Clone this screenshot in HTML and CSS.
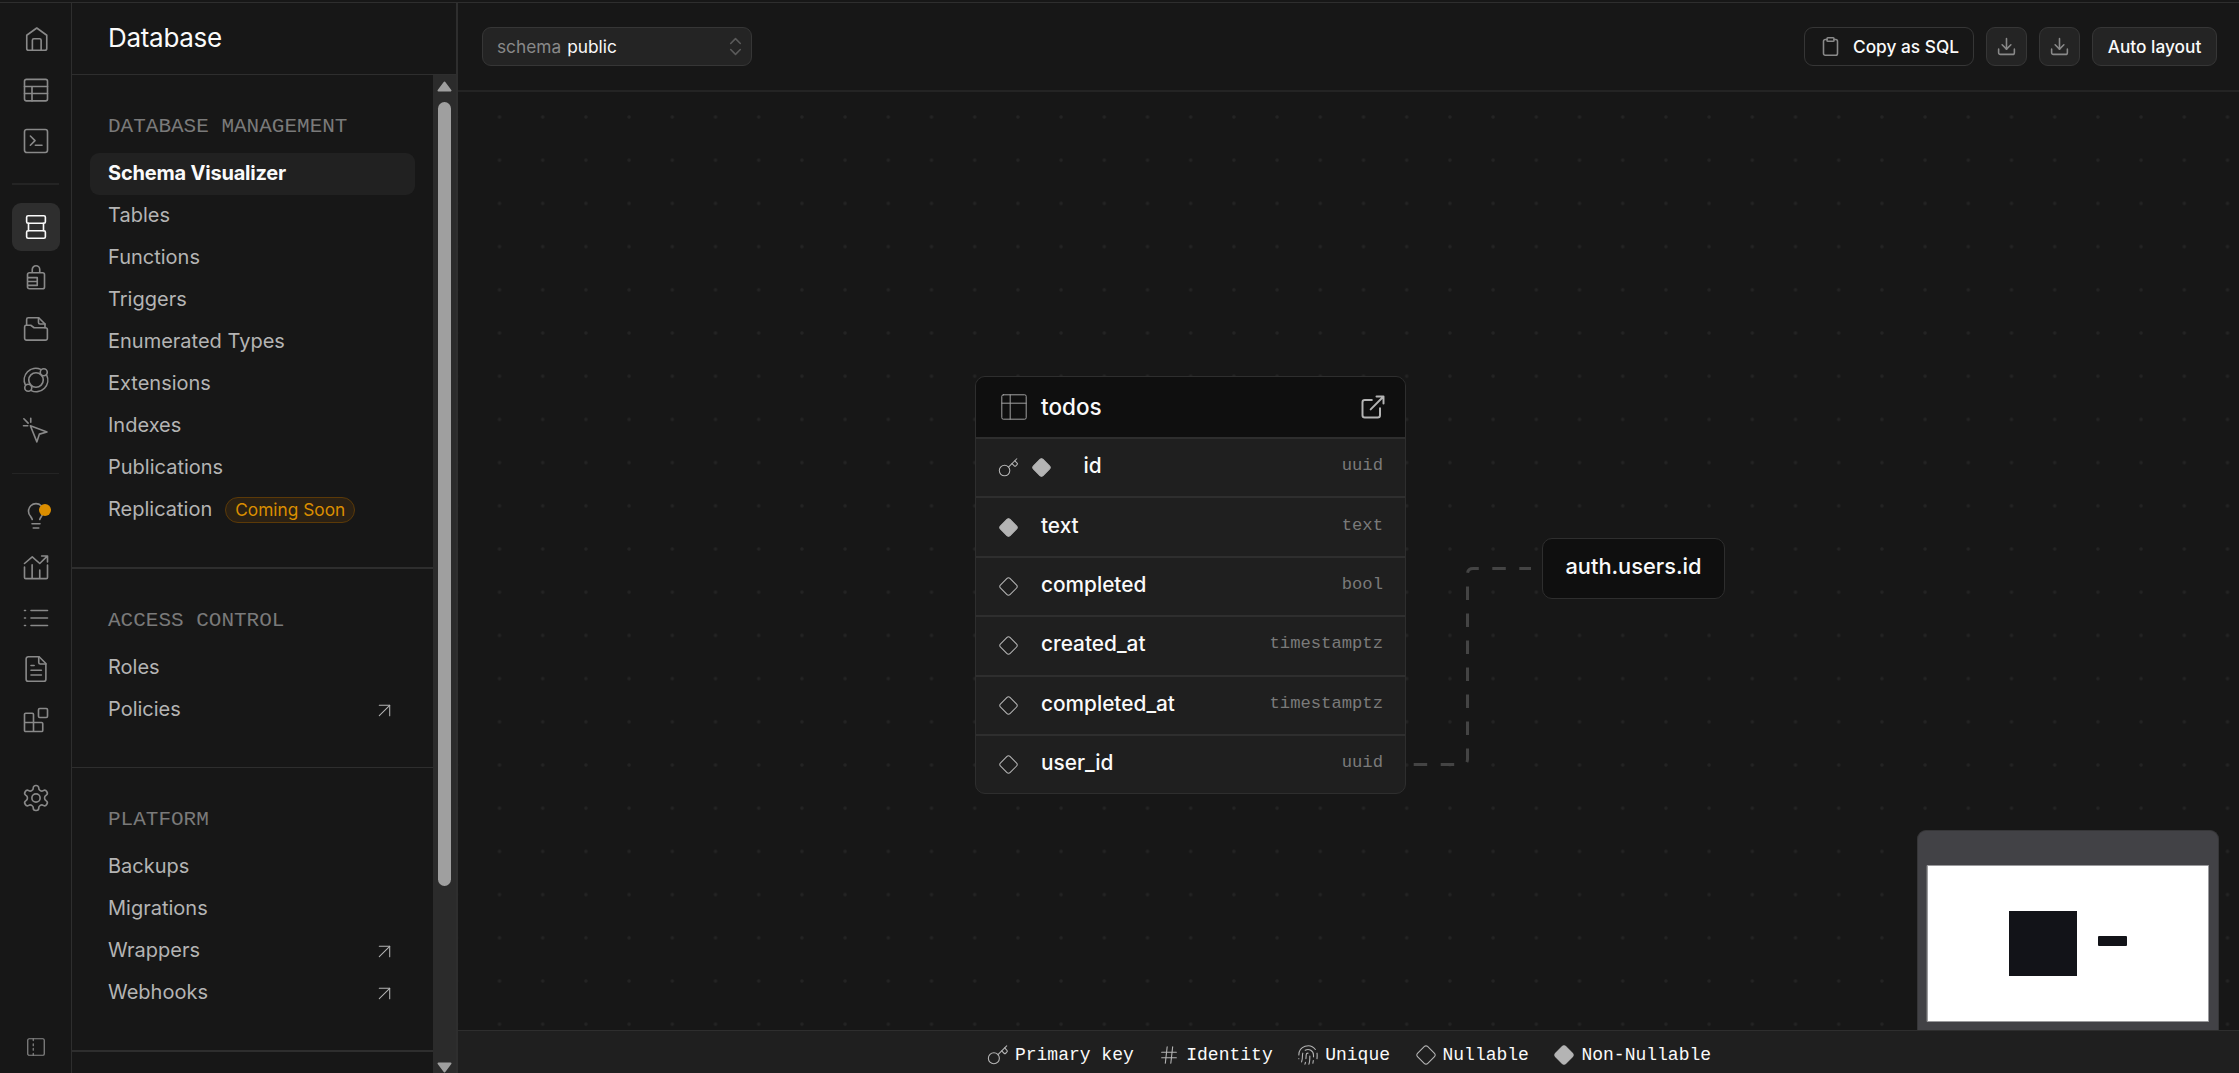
FILE: index.html
```html
<!DOCTYPE html>
<html lang="en">
<head>
  <meta charset="UTF-8">
  <meta name="viewport" content="width=device-width, initial-scale=1.0">
  <title>Schema Visualizer | Database</title>
  <link rel="stylesheet" href="styles.css">
</head>
<body>
  <svg class="sprite" width="0" height="0">
    <symbol id="i-diamond" viewBox="0 0 24 24"><path d="M2.7 10.3a2.41 2.41 0 0 0 0 3.41l7.59 7.59a2.41 2.41 0 0 0 3.41 0l7.59-7.59a2.41 2.41 0 0 0 0-3.41l-7.59-7.59a2.41 2.41 0 0 0-3.41 0Z"/></symbol>
    <symbol id="i-key" viewBox="0 0 24 24"><circle cx="7.5" cy="15.5" r="6"/><path d="M12 11.5 21.5 2"/><path d="m16 7.5 2.6 2.6a1.3 1.3 0 0 0 1.8 0l1.4-1.4a1.3 1.3 0 0 0 0-1.8L19.3 4.3"/></symbol>
    <symbol id="i-arrow" viewBox="0 0 24 24"><path d="M7 7h10v10"/><path d="M7 17 17 7"/></symbol>
    <symbol id="i-download" viewBox="0 0 24 24"><path d="M21 15v4a2 2 0 0 1-2 2H5a2 2 0 0 1-2-2v-4"/><path d="m7 10 5 5 5-5"/><path d="M12 15V3"/></symbol>
  </svg>

  <div class="app">
    <nav class="rail">
      <a class="rail-item"><svg viewBox="0 0 24 24"><path d="M4.6 9 12.600 3.200l8 5.800V19.500a1.500 1.500 0 0 1-1.500 1.500h-13A1.500 1.500 0 0 1 4.600 19.500Z"/><path d="M9.100 21v-8a1.200 1.200 0 0 1 1.200-1.200h4.600a1.200 1.200 0 0 1 1.200 1.200v8"/></svg></a>
      <a class="rail-item"><svg viewBox="0 0 24 24"><rect x="2.800" y="3.500" width="18.400" height="17.200" rx="1.500"/><path d="M2.800 9.200h18.400M2.800 14.800h18.400M8.800 9.200v11.500"/></svg></a>
      <a class="rail-item"><svg viewBox="0 0 24 24"><rect x="2.800" y="2.800" width="18.400" height="18.400" rx="1.800"/><path d="m7.500 8 3.700 3.700-3.700 3.700M11.500 15.400h5.300"/></svg></a>
      <hr class="rail-line">
      <a class="rail-item active"><svg viewBox="0 0 24 24"><rect x="4.500" y="3" width="15" height="6" rx="1.200"/><path d="M6 9v6M18 9v6"/><rect x="4.500" y="15" width="15" height="6" rx="1.200"/></svg></a>
      <a class="rail-item"><svg viewBox="0 0 24 24"><path d="M5.200 9.300a1.500 1.500 0 0 1 1.500-1.500h10.600a1.500 1.500 0 0 1 1.500 1.500v9.800a1.500 1.500 0 0 1-1.500 1.500H6.700a1.500 1.500 0 0 1-1.500-1.500ZM9 7.800V5.200a3 3 0 0 1 6 0v2.600M5.200 11.700h7.800v6.200H5.200M5.200 14.800h7.800"/></svg></a>
      <a class="rail-item"><svg viewBox="0 0 24 24"><path d="M4.500 9V4.300A1.300 1.300 0 0 1 5.800 3h8.400l5 5v3"/><path d="M14 3v3.800a1.200 1.200 0 0 0 1.200 1.200h4"/><path d="M2.900 10.200A1.300 1.300 0 0 1 4.200 9h3.600l2.700 2h9.100a1.500 1.500 0 0 1 1.500 1.500v6.900a1.500 1.500 0 0 1-1.500 1.500H4.400a1.500 1.500 0 0 1-1.500-1.500Z"/></svg></a>
      <a class="rail-item"><svg viewBox="0 0 24 24"><circle cx="12" cy="12" r="5.800"/><circle cx="18.200" cy="5.800" r="2.800"/><circle cx="5.800" cy="18.200" r="2.800"/><path d="M15.800 3.500A9.300 9.300 0 0 0 3.500 16M8.200 20.500A9.300 9.300 0 0 0 20.500 8"/></svg></a>
      <a class="rail-item"><svg viewBox="0 0 24 24"><path d="m7.500 7.800 13.300 5-6.100 1.700-2 6.200Z"/><path d="M7.800 1.800v3.200M2 7.800h3.400M2.300 2.200l3.400 3.500"/></svg></a>
      <hr class="rail-line thin">
      <a class="rail-item"><svg viewBox="0 0 24 24"><path d="M9 14.800c-.3-1-.9-1.700-1.400-2.600a6 6 0 1 1 8.800 0c-.5.900-1.100 1.600-1.400 2.600M8.800 18.200h6.400M9.800 21.600h4.400"/></svg><span class="dot"></span></a>
      <a class="rail-item"><svg viewBox="0 0 24 24"><path d="M2.800 12v8.300a1 1 0 0 0 1 1h16.400a1 1 0 0 0 1-1V10.500M8.900 21.300V10.200M15 21.300v-6.800M2.800 9.200 9 3.900l6 5.300 6-5.900M16.500 3.200h4.700v4.700"/></svg></a>
      <a class="rail-item"><svg viewBox="0 0 24 24"><path d="M8 6h13.200M8 12h13.200M8 18h13.200M2.800 6h.8M2.800 12h.8M2.800 18h.8"/></svg></a>
      <a class="rail-item"><svg viewBox="0 0 24 24"><path d="M14.500 2.200H5.800A1.700 1.700 0 0 0 4.100 3.900v16.200a1.700 1.700 0 0 0 1.700 1.700h12.400a1.700 1.700 0 0 0 1.700-1.700V7.600Z"/><path d="M14.200 2.200v4.600a1.200 1.200 0 0 0 1.200 1.200h4.500M8 9.200h2.500M8 13h8.300M8 16.800h8.300"/></svg></a>
      <a class="rail-item"><svg viewBox="0 0 24 24"><rect x="14" y="2.800" width="7.200" height="7.200" rx="1"/><path d="M10 21.200V7.500A.9.900 0 0 0 9.100 6.600H3.700a.9.900 0 0 0-.9.900v12.800a.9.900 0 0 0 .9.900h12.800a.9.900 0 0 0 .9-.9v-5.400a.9.900 0 0 0-.9-.9H2.800"/></svg></a>
      <a class="rail-item settings"><svg viewBox="0 0 24 24"><path d="M12.220 2h-.44a2 2 0 0 0-2 2v.18a2 2 0 0 1-1 1.730l-.43.250a2 2 0 0 1-2 0l-.15-.08a2 2 0 0 0-2.730.730l-.22.380a2 2 0 0 0 .730 2.730l.15.100a2 2 0 0 1 1 1.720v.510a2 2 0 0 1-1 1.740l-.15.090a2 2 0 0 0-.73 2.730l.22.380a2 2 0 0 0 2.730.730l.15-.08a2 2 0 0 1 2 0l.43.250a2 2 0 0 1 1 1.730V20a2 2 0 0 0 2 2h.44a2 2 0 0 0 2-2v-.18a2 2 0 0 1 1-1.730l.43-.25a2 2 0 0 1 2 0l.15.080a2 2 0 0 0 2.730-.73l.22-.39a2 2 0 0 0-.73-2.730l-.15-.08a2 2 0 0 1-1-1.740v-.5a2 2 0 0 1 1-1.740l.15-.09a2 2 0 0 0 .730-2.730l-.22-.38a2 2 0 0 0-2.730-.73l-.15.080a2 2 0 0 1-2 0l-.43-.25a2 2 0 0 1-1-1.730V4a2 2 0 0 0-2-2z"/><circle cx="12" cy="12" r="3.300"/></svg></a>
      <a class="rail-toggle"><svg viewBox="0 0 24 24"><rect x="3" y="3" width="18" height="18" rx="1.500"/><path d="M9 3v2M9 8.500v2M9 13.500v2M9 19v2"/></svg></a>
    </nav>

    <aside class="sidebar">
      <h1 class="sidebar-title">Database</h1>
      <div class="sidebar-body">
        <div class="menu">
          <section class="group">
            <h2>DATABASE MANAGEMENT</h2>
            <a class="link current">Schema Visualizer</a>
            <a class="link">Tables</a>
            <a class="link">Functions</a>
            <a class="link">Triggers</a>
            <a class="link">Enumerated Types</a>
            <a class="link">Extensions</a>
            <a class="link">Indexes</a>
            <a class="link">Publications</a>
            <a class="link">Replication <span class="badge">Coming Soon</span></a>
          </section>
          <section class="group thin">
            <h2>ACCESS CONTROL</h2>
            <a class="link">Roles</a>
            <a class="link">Policies <svg><use href="#i-arrow"/></svg></a>
          </section>
          <section class="group">
            <h2>PLATFORM</h2>
            <a class="link">Backups</a>
            <a class="link">Migrations</a>
            <a class="link">Wrappers <svg><use href="#i-arrow"/></svg></a>
            <a class="link">Webhooks <svg><use href="#i-arrow"/></svg></a>
          </section>
        </div>
        <div class="scrollbar">
          <svg class="scroll-arrow" viewBox="0 0 15 11"><path d="M7.500 1.500 13.500 9.500h-12Z"/></svg>
          <div class="thumb"></div>
          <svg class="scroll-arrow down" viewBox="0 0 15 11"><path d="M1.500 1.500h12l-6 8Z"/></svg>
        </div>
      </div>
    </aside>

    <main class="main">
      <header class="toolbar">
        <button class="select"><span class="muted">schema</span><span>public</span><svg viewBox="0 0 24 24"><path d="m6.500 8.500 5.500-5.500 5.500 5.500M6.500 15.500l5.500 5.500 5.500-5.500"/></svg></button>
        <button class="btn outline"><svg viewBox="0 0 24 24"><rect x="8" y="2" width="8" height="4" rx="1"/><path d="M16 4h2a2 2 0 0 1 2 2v14a2 2 0 0 1-2 2H6a2 2 0 0 1-2-2V6a2 2 0 0 1 2-2h2"/></svg><span>Copy as SQL</span></button>
        <button class="btn icon"><svg><use href="#i-download"/></svg></button>
        <button class="btn icon"><svg><use href="#i-download"/></svg></button>
        <button class="btn auto"><span>Auto layout</span></button>
      </header>

      <div class="canvas">
        <svg class="grid">
          <defs>
            <pattern id="dots" x="19.900" y="3.400" width="43.200" height="43.200" patternUnits="userSpaceOnUse"><circle cx="21.600" cy="21.600" r="1.700"/></pattern>
          </defs>
          <rect width="100%" height="100%" fill="url(#dots)"/>
          <path class="edge" d="M955.700 672.500H1004Q1009.500 672.500 1009.500 667V482Q1009.500 476.500 1015 476.500H1073"/>
        </svg>

        <div class="node table-node">
          <div class="node-head">
            <svg class="ic-table" viewBox="0 0 26 26"><rect x=".8" y=".8" width="24.400" height="24.400" rx="1.500"/><path d="M.8 9.200h24.400M9.200.8v24.400"/></svg>
            <span>todos</span>
            <svg class="ic-open" viewBox="0 0 24 24"><path d="M15 3h6v6M10 14 21 3M18 13v6a2 2 0 0 1-2 2H5a2 2 0 0 1-2-2V8a2 2 0 0 1 2-2h6"/></svg>
          </div>
          <div class="col pk"><svg><use href="#i-key"/></svg><svg class="solid"><use href="#i-diamond"/></svg><span>id</span><code>uuid</code></div>
          <div class="col"><svg class="solid"><use href="#i-diamond"/></svg><span>text</span><code>text</code></div>
          <div class="col"><svg><use href="#i-diamond"/></svg><span>completed</span><code>bool</code></div>
          <div class="col"><svg><use href="#i-diamond"/></svg><span>created_at</span><code>timestamptz</code></div>
          <div class="col"><svg><use href="#i-diamond"/></svg><span>completed_at</span><code>timestamptz</code></div>
          <div class="col"><svg><use href="#i-diamond"/></svg><span>user_id</span><code>uuid</code></div>
        </div>

        <div class="node foreign-node">auth.users.id</div>

        <div class="minimap">
          <svg viewBox="0 0 300 200"><rect class="view" x="9.500" y="34.500" width="281" height="156"/><rect x="91" y="80" width="68" height="65"/><rect x="180" y="105" width="29" height="10" rx="1"/></svg>
        </div>
      </div>

      <footer class="legend">
        <div><svg><use href="#i-key"/></svg>Primary key</div>
        <div><svg viewBox="0 0 24 24"><path d="M4 9h16M4 15h16M10 3 8 21M16 3l-2 18"/></svg>Identity</div>
        <div><svg viewBox="0 0 24 24"><path d="M12 10a2 2 0 0 0-2 2c0 1.020-.1 2.510-.26 4M14 13.120c0 2.380 0 6.380-1 8.880M17.290 21.020c.12-.6.43-2.300.5-3.020M2 12a10 10 0 0 1 18-6M2 16h.01M21.800 16c.2-2 .131-5.354 0-6M5 19.500C5.500 18 6 15 6 12a6 6 0 0 1 .34-2M8.650 22c.21-.66.45-1.320.57-2M9 6.800a6 6 0 0 1 9 5.200v2"/></svg>Unique</div>
        <div><svg><use href="#i-diamond"/></svg>Nullable</div>
        <div><svg class="solid"><use href="#i-diamond"/></svg>Non-Nullable</div>
      </footer>
    </main>
  </div>
</body>
</html>
```
FILE: styles.css
```css
* {
  box-sizing: border-box;
}
body {
  margin: 0;
  height: 100vh;
  overflow: hidden;
  background: #171717;
  color: #fafafa;
  font-family: Inter, "Liberation Sans", sans-serif;
}
svg {
  display: block;
  flex: none;
  fill: none;
  stroke: currentColor;
  stroke-linecap: round;
  stroke-linejoin: round;
}
.sprite {
  position: absolute;
}
.app {
  display: flex;
  height: 100vh;
  padding-top: 2px;
}

/* icon rail */
.rail {
  display: flex;
  flex-direction: column;
  align-items: center;
  width: 72px;
  padding-top: 12px;
  border-top: 1px solid #2e2e2e;
  border-right: 1px solid #2e2e2e;
  color: #898989;
}
.rail-item {
  position: relative;
  display: flex;
  align-items: center;
  justify-content: center;
  width: 48px;
  height: 48px;
  margin-bottom: 3px;
  border-radius: 9px;
  flex: none;
}
.rail-item svg {
  width: 30px;
  height: 30px;
  stroke-width: 1.3;
}
.rail-item.active {
  background: #2e2e2e;
  color: #fafafa;
}
.rail-line {
  width: 47px;
  height: 2px;
  margin: 15px 0 18px;
  border: 0;
  background: #242424;
  flex: none;
}
.rail-line.thin {
  height: 1px;
}
.dot {
  position: absolute;
  top: 12px;
  right: 9px;
  width: 12px;
  height: 12px;
  border-radius: 50%;
  background: #db8e00;
}
.rail-item.settings {
  margin-top: 27px;
}
.rail-toggle {
  margin-top: auto;
  margin-bottom: 15px;
}
.rail-toggle svg {
  width: 22px;
  height: 22px;
  stroke-width: 1.3;
}

/* sidebar */
.sidebar {
  display: flex;
  flex-direction: column;
  width: 386px;
  border-top: 1px solid #2e2e2e;
  border-right: 2px solid #2e2e2e;
}
.sidebar-title {
  margin: 0;
  height: 72px;
  padding-left: 36px;
  border-bottom: 1px solid #2e2e2e;
  font-size: 26px;
  font-weight: 400;
  line-height: 70px;
  letter-spacing: -0.3px;
  flex: none;
}
.sidebar-body {
  display: flex;
  flex: 1;
  min-height: 0;
}
.menu {
  flex: 1;
  overflow: hidden;
}
.group {
  padding: 36px 18px;
  border-bottom: 2px solid #2e2e2e;
}
.group.thin {
  border-bottom-width: 1px;
}
.group h2 {
  margin: 0 0 12px;
  padding: 2px 0 0 18px;
  font: 400 21px/28px "Liberation Mono", monospace;
  color: #7a7a7a;
}
.link {
  display: flex;
  align-items: center;
  height: 42px;
  padding: 0 18px 3px;
  border-radius: 9px;
  color: #b4b4b4;
  font-size: 20px;
}
.link.current {
  background: #212121;
  color: #fafafa;
  font-weight: 700;
  letter-spacing: -0.2px;
}
.link svg {
  width: 25px;
  height: 25px;
  margin: 3px 0 0 auto;
  stroke-width: 1;
}
.badge {
  height: 26px;
  margin: 3px 0 0 13px;
  padding: 0 9px;
  border: 1px solid #5c3a08;
  border-radius: 13px;
  background: #2b2114;
  color: #db8e00;
  font-size: 17.3px;
  line-height: 23px;
}
.scrollbar {
  display: flex;
  flex-direction: column;
  align-items: center;
  width: 23px;
  padding-top: 6px;
  background: #2b2b2b;
}
.scroll-arrow {
  width: 15px;
  height: 11px;
  fill: #9f9f9f;
  stroke: #9f9f9f;
  stroke-width: 2;
}
.thumb {
  width: 13px;
  height: 784px;
  margin-top: 10px;
  border-radius: 7px;
  background: #9f9f9f;
  flex: none;
}
.scroll-arrow.down {
  margin-top: auto;
}

/* toolbar */
.main {
  display: flex;
  flex-direction: column;
  flex: 1;
  min-width: 0;
  border-top: 1px solid #2e2e2e;
}
.toolbar {
  display: flex;
  align-items: center;
  gap: 12px;
  height: 89px;
  padding: 0 22px 0 24px;
  border-bottom: 2px solid #242424;
  flex: none;
}
.toolbar button {
  display: flex;
  align-items: center;
  height: 39px;
  border: 1px solid #363636;
  border-radius: 9px;
  background: #242424;
  color: #fafafa;
  font-family: inherit;
  font-size: 17.3px;
  white-space: nowrap;
}
.toolbar button svg {
  width: 21px;
  height: 21px;
  color: #898989;
  stroke-width: 1.8;
}
.toolbar .select {
  width: 270px;
  margin-right: auto;
  padding: 0 5px 0 14px;
  gap: 6px;
}
.select .muted {
  color: #898989;
}
.toolbar .select svg {
  margin-left: auto;
  color: #5a5a5a;
}
.toolbar .outline {
  width: 170px;
  padding: 0 15px;
  gap: 12px;
  background: #171717;
}
.toolbar .btn {
  font-weight: 500;
}
.toolbar .icon {
  justify-content: center;
  width: 41px;
  padding: 0;
}
.toolbar .auto {
  justify-content: center;
  width: 125px;
  padding: 0;
}

/* schema canvas */
.canvas {
  position: relative;
  flex: 1;
  overflow: hidden;
}
.grid {
  width: 100%;
  height: 100%;
  stroke: none;
}
.grid circle {
  fill: #242424;
}
.edge {
  stroke: #444;
  stroke-width: 3;
  stroke-linecap: butt;
  stroke-dasharray: 13.5 13.5;
}
.node {
  position: absolute;
  border: 1.35px solid #2e2e2e;
  border-radius: 10px;
  overflow: hidden;
  font-weight: 500;
}
.table-node {
  left: 517px;
  top: 284px;
  width: 431px;
  background: #1f1f1f;
}
.node-head {
  display: flex;
  align-items: center;
  height: 60px;
  padding: 0 18px 0 25px;
  background: #0f0f0f;
  font-size: 22.5px;
}
.node-head span {
  padding-bottom: 2px;
}
.ic-table {
  width: 26px;
  height: 26px;
  margin-right: 14px;
  color: #a0a0a0;
}
.ic-open {
  width: 28px;
  height: 28px;
  margin-left: auto;
  color: #b4b4b4;
  stroke-width: 1.7;
}
.col {
  display: flex;
  align-items: center;
  height: 59.4px;
  padding: 0 22px 0 22px;
  border-top: 2px solid #2e2e2e;
  font-size: 20.8px;
}
.col svg {
  width: 21px;
  height: 21px;
  margin-right: 22px;
  color: #b4b4b4;
  stroke-width: 1.2;
}
.pk svg {
  margin-right: 11.5px;
}
.pk .solid {
  margin-right: 32px;
}
.solid {
  fill: #b4b4b4;
}
.col span,
.col code {
  padding-bottom: 4px;
}
.col code {
  margin-left: auto;
  color: #7a7a7a;
  font: 400 17.2px "Liberation Mono", monospace;
}
.foreign-node {
  left: 1084px;
  top: 446px;
  width: 183px;
  height: 61px;
  background: #0f0f0f;
  font-size: 21.8px;
  line-height: 55px;
  text-align: center;
}
.minimap {
  position: absolute;
  right: 20px;
  bottom: 0;
  width: 302px;
  height: 200px;
  border: 1px solid #363638;
  border-bottom: 0;
  border-radius: 9px 9px 0 0;
  background: #424246;
  overflow: hidden;
}
.minimap svg {
  width: 300px;
  height: 200px;
  fill: #121318;
  stroke: none;
}
.minimap .view {
  fill: #fff;
  stroke: #9a9a9d;
}

/* legend */
.legend {
  display: flex;
  align-items: center;
  justify-content: center;
  gap: 24.5px;
  height: 43px;
  padding: 5px 0 0 1px;
  border-top: 1px solid #2e2e2e;
  background: #1f1f1f;
  font: 400 18px "Liberation Mono", monospace;
  flex: none;
}
.legend div {
  display: flex;
  align-items: center;
  gap: 6px;
}
.legend svg {
  width: 22px;
  height: 22px;
  color: #b4b4b4;
  stroke-width: 1.2;
}
```
